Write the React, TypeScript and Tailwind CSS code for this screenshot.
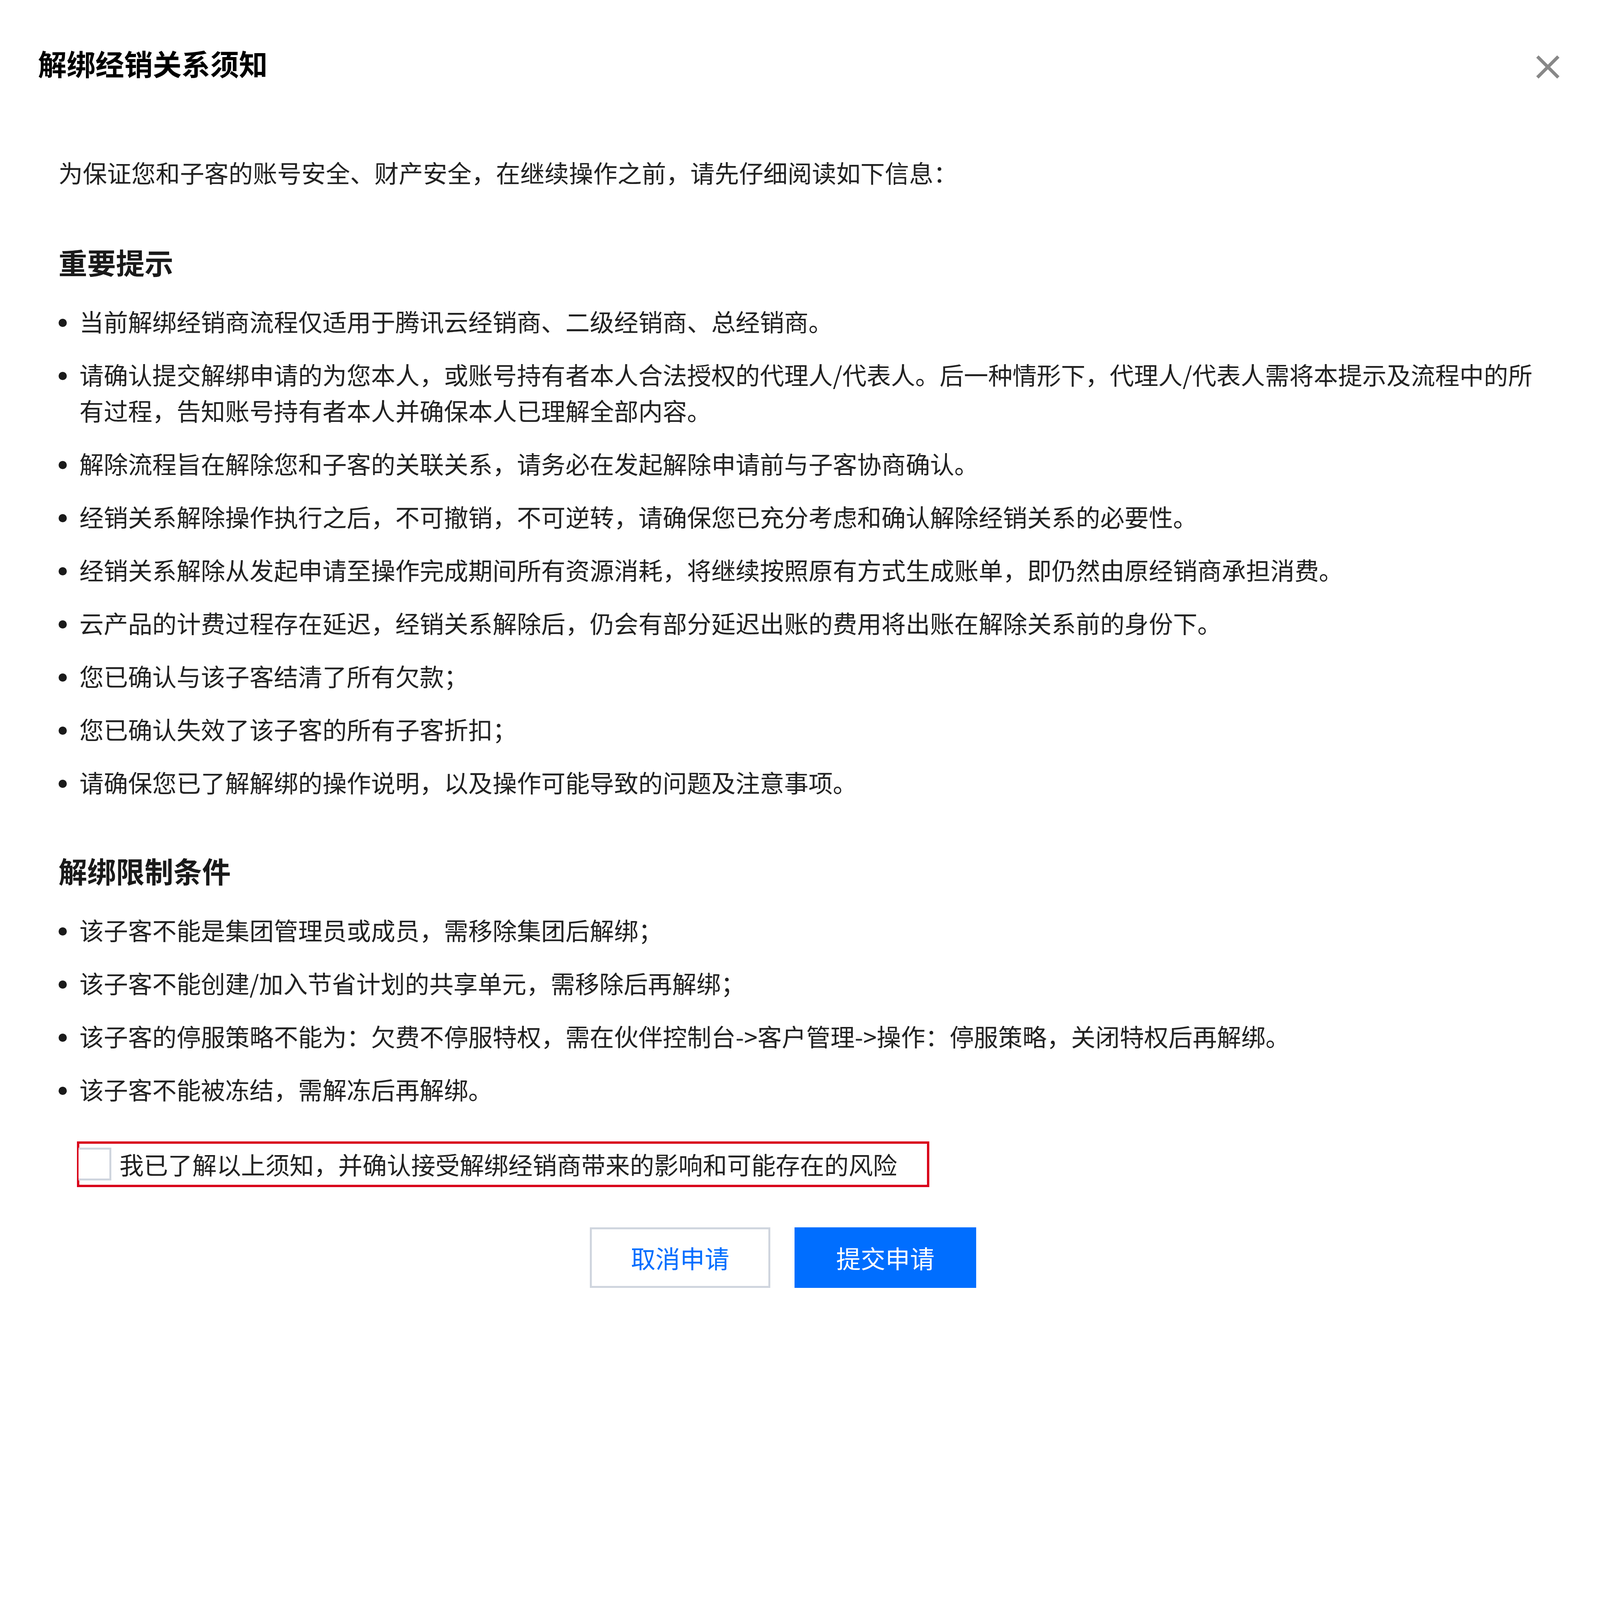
import React, { useState } from "react";

// 1x design (780px wide modal), scaled up to fill the capture width
const tips = [
  "当前解绑经销商流程仅适用于腾讯云经销商、二级经销商、总经销商。",
  "请确认提交解绑申请的为您本人，或账号持有者本人合法授权的代理人/代表人。后一种情形下，代理人/代表人需将本提示及流程中的所有过程，告知账号持有者本人并确保本人已理解全部内容。",
  "解除流程旨在解除您和子客的关联关系，请务必在发起解除申请前与子客协商确认。",
  "经销关系解除操作执行之后，不可撤销，不可逆转，请确保您已充分考虑和确认解除经销关系的必要性。",
  "经销关系解除从发起申请至操作完成期间所有资源消耗，将继续按照原有方式生成账单，即仍然由原经销商承担消费。",
  "云产品的计费过程存在延迟，经销关系解除后，仍会有部分延迟出账的费用将出账在解除关系前的身份下。",
  "您已确认与该子客结清了所有欠款；",
  "您已确认失效了该子客的所有子客折扣；",
  "请确保您已了解解绑的操作说明，以及操作可能导致的问题及注意事项。",
];

const limits = [
  "该子客不能是集团管理员或成员，需移除集团后解绑；",
  "该子客不能创建/加入节省计划的共享单元，需移除后再解绑；",
  "该子客的停服策略不能为：欠费不停服特权，需在伙伴控制台->客户管理->操作：停服策略，关闭特权后再解绑。",
  "该子客不能被冻结，需解冻后再解绑。",
];

const BulletList = ({ items, className }: { items: string[]; className: string }) => (
  <ul className={`flex flex-col gap-[8.4px] text-[11.85px] leading-[17.5px] text-[#222222] ${className}`}>
    {items.map((text, i) => (
      <li key={i} className="flex items-start">
        <span className="mt-[7.4px] mr-[6.2px] h-[4px] w-[4px] shrink-0 rounded-full bg-[#1a1a1a]" />
        <span className="flex-1">{text}</span>
      </li>
    ))}
  </ul>
);

const CloseIcon = () => (
  <svg viewBox="0 0 12 12" className="h-[12px] w-[12px]" fill="none">
    <path d="M0.9 0.9L11.1 11.1M11.1 0.9L0.9 11.1" stroke="#888888" strokeWidth="1.6" />
  </svg>
);

export default function App() {
  // the modal is laid out at 780px and zoomed to the window width
  const [scale] = useState(() => (typeof window !== "undefined" ? window.innerWidth / 780 : 1));

  return (
    <div className="min-h-screen overflow-hidden bg-white">
      <div
        style={{ zoom: scale }}
        className="h-[645.4px] w-[780px] bg-white font-['PingFang_SC','Noto_Sans_CJK_SC',sans-serif]"
      >
        {/* header */}
        <div className="flex items-start justify-between pt-[20.7px] pl-[18.5px] pr-[19.5px]">
          <h1 className="text-sm leading-5 font-bold text-black">解绑经销关系须知</h1>
          <button className="mt-[6px]">
            <CloseIcon />
          </button>
        </div>

        {/* body */}
        <div className="pl-[28.5px] pr-[24px]">
          <p className="mt-[34.4px] text-[11.85px] leading-[18px] text-[#222222]">
            为保证您和子客的账号安全、财产安全，在继续操作之前，请先仔细阅读如下信息：
          </p>

          <h2 className="mt-[24.6px] text-sm leading-5 font-bold text-[#1a1a1a]">重要提示</h2>
          <BulletList items={tips} className="mt-[10.3px]" />

          <h2 className="mt-[24.2px] text-sm leading-5 font-bold text-[#1a1a1a]">解绑限制条件</h2>
          <BulletList items={limits} className="mt-[10.35px]" />

          <label className="mt-[16.45px] ml-[9px] flex h-[22.4px] w-[415.5px] items-center border-[1.3px] border-[#d9001b]">
            <span className="ml-[-0.4px] h-[16px] w-[16px] shrink-0 border border-l-0 border-[#cfd5de] bg-white" />
            <span className="ml-[4px] text-[11.85px] leading-[18px] text-[#222222]">
              我已了解以上须知，并确认接受解绑经销商带来的影响和可能存在的风险
            </span>
          </label>
        </div>

        {/* footer */}
        <div className="mt-[19.5px] flex justify-center gap-[11.8px] pr-[16.6px]">
          <button className="h-[29.5px] w-[88px] border border-[#cfd5de] bg-white text-xs text-[#006eff]">
            取消申请
          </button>
          <button className="h-[29.5px] w-[88.5px] bg-[#006eff] text-xs text-white">提交申请</button>
        </div>
      </div>
    </div>
  );
}
